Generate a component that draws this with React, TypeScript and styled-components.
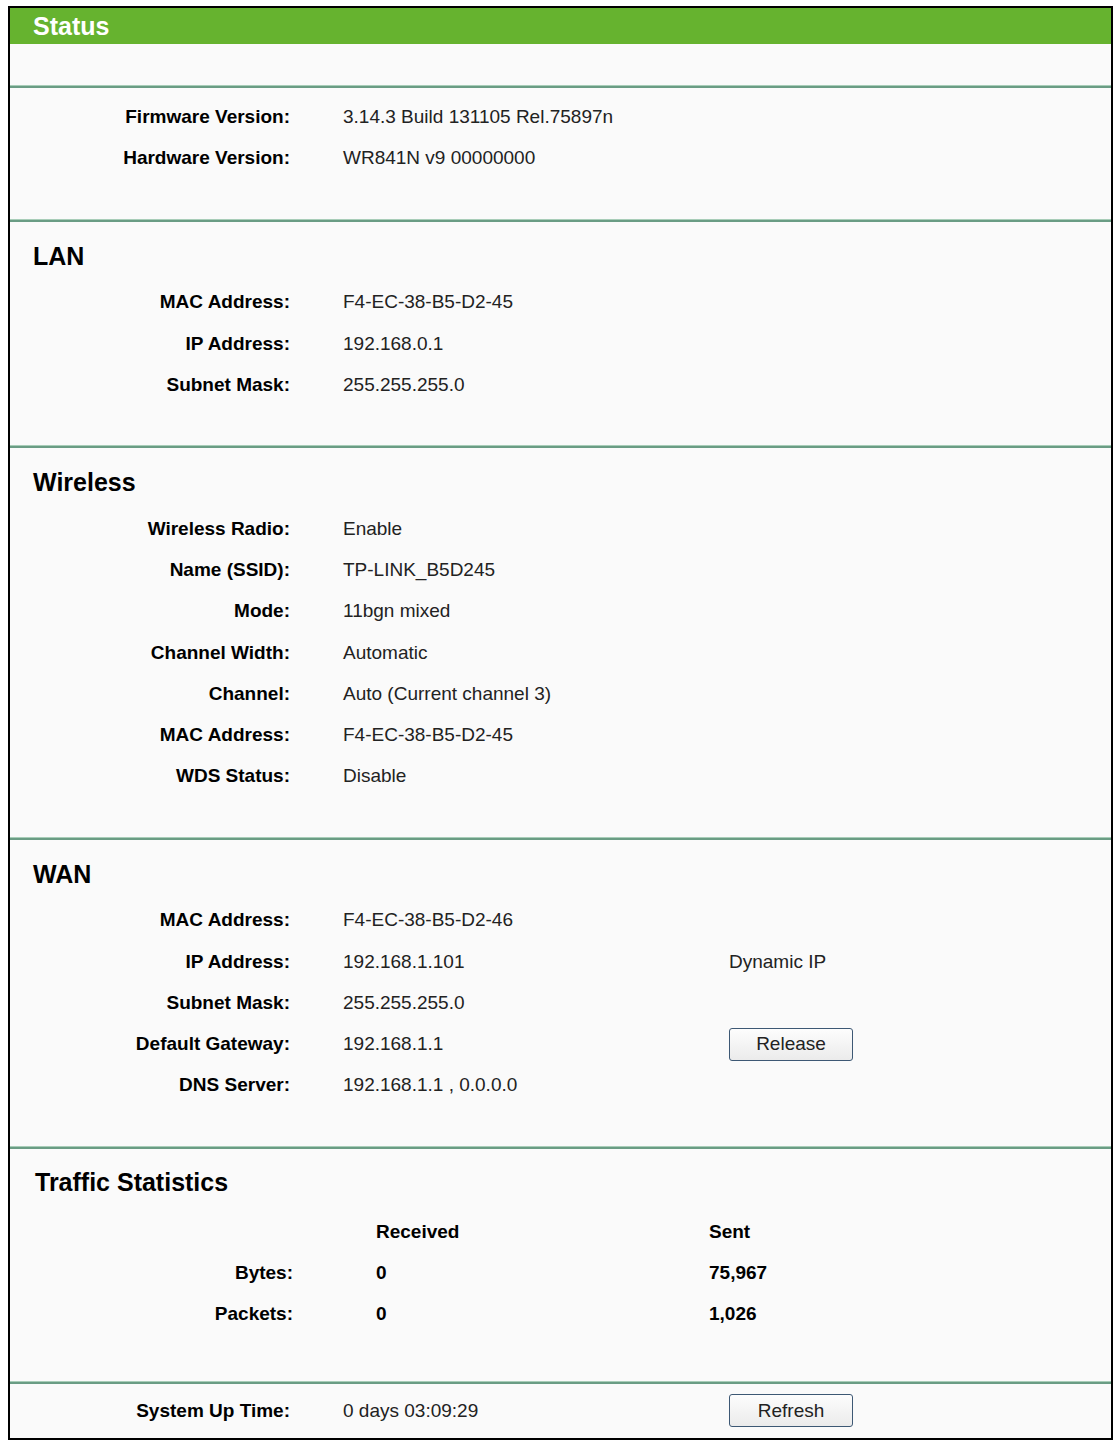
import React from 'react'
import styled, { createGlobalStyle } from 'styled-components'

const GlobalStyle = createGlobalStyle`
body {
    margin: 0;
    background: #ffffff;
    font-family: "Liberation Sans", Arial, sans-serif;
}
`

const Frame = styled.div`
width : 1105px;
margin : 6px 0 0 8px;
box-sizing : border-box;
border : 2px solid #000;
background : #fafafa;
font-size : 19px;
color : #222;
`
const TitleBar = styled.div`
height : 36px;
display : flex;
align-items : center;
padding-left : 23px;
background : #66b32f;
color : #fff;
font-size : 25px;
font-weight : bold;
`
const Spacer = styled.div<{ $h: number }>`
height : ${p => p.$h}px;
`
const Divider = styled.div`
height : 3px;
background : #6a9c84;
border-top : 1px solid #a8cdb8;
box-sizing : border-box;
`
const Section = styled.div<{ $top?: number, $bottom: number }>`
padding-top : ${p => p.$top || 0}px;
padding-bottom : ${p => p.$bottom}px;
`
const Heading = styled.div<{ $top: number, $bottom: number, $left?: number }>`
padding : ${p => p.$top}px 0 ${p => p.$bottom}px ${p => p.$left || 23}px;
font-size : 25px;
line-height : 30px;
font-weight : bold;
color : #000;
`
const InfoGrid = styled.div<{ $label: number, $gap: number, $value: number, $row: number }>`
display : grid;
grid-template-columns : ${p => p.$label}px ${p => p.$gap}px ${p => p.$value}px 1fr;
grid-auto-rows : ${p => p.$row}px;
align-items : center;
`
const Label = styled.div`
grid-column : 1;
text-align : right;
font-weight : bold;
color : #000;
white-space : nowrap;
`
const Value = styled.div<{ $bold?: boolean }>`
grid-column : 3;
white-space : nowrap;
font-weight : ${p => p.$bold ? 'bold' : 'normal'};
color : ${p => p.$bold ? '#000' : '#222'};
`
const Extra = styled.div<{ $bold?: boolean }>`
grid-column : 4;
white-space : nowrap;
font-weight : ${p => p.$bold ? 'bold' : 'normal'};
color : ${p => p.$bold ? '#000' : '#222'};
`
const Button = styled.button`
width : 124px;
height : 33px;
padding : 0;
border : 1px solid #3d5874;
border-radius : 3px;
background : linear-gradient(#fdfdfd, #ebebeb);
font-family : "Liberation Sans", Arial, sans-serif;
font-size : 19px;
color : #222;
`

type Row = { label: string, value: string, extra?: React.ReactNode }

const ROW = 41.3

function Rows({ rows }: { rows: Array<Row> }) {
    return (
        <InfoGrid $label={280} $gap={53} $value={386} $row={ROW}>
            {rows.map((r, i) => (
                <React.Fragment key={i}>
                    <Label>{r.label}</Label>
                    <Value>{r.value}</Value>
                    {r.extra ? <Extra>{r.extra}</Extra> : null}
                </React.Fragment>
            ))}
        </InfoGrid>
    )
}

function InfoSection({ title, rows }: { title: string, rows: Array<Row> }) {
    return (
        <Section $bottom={40}>
            <Heading $top={19} $bottom={10.5}>{title}</Heading>
            <Rows rows={rows} />
        </Section>
    )
}

function App() {
    return (
        <>
            <GlobalStyle />
            <Frame>
                <TitleBar>Status</TitleBar>
                <Spacer $h={40.5} />
                <Divider />
                <Section $top={9} $bottom={40}>
                    <Rows rows={[
                        { label: 'Firmware Version:', value: '3.14.3 Build 131105 Rel.75897n' },
                        { label: 'Hardware Version:', value: 'WR841N v9 00000000' },
                    ]} />
                </Section>
                <Divider />
                <InfoSection title="LAN" rows={[
                    { label: 'MAC Address:', value: 'F4-EC-38-B5-D2-45' },
                    { label: 'IP Address:', value: '192.168.0.1' },
                    { label: 'Subnet Mask:', value: '255.255.255.0' },
                ]} />
                <Divider />
                <InfoSection title="Wireless" rows={[
                    { label: 'Wireless Radio:', value: 'Enable' },
                    { label: 'Name (SSID):', value: 'TP-LINK_B5D245' },
                    { label: 'Mode:', value: '11bgn mixed' },
                    { label: 'Channel Width:', value: 'Automatic' },
                    { label: 'Channel:', value: 'Auto (Current channel 3)' },
                    { label: 'MAC Address:', value: 'F4-EC-38-B5-D2-45' },
                    { label: 'WDS Status:', value: 'Disable' },
                ]} />
                <Divider />
                <InfoSection title="WAN" rows={[
                    { label: 'MAC Address:', value: 'F4-EC-38-B5-D2-46' },
                    { label: 'IP Address:', value: '192.168.1.101', extra: 'Dynamic IP' },
                    { label: 'Subnet Mask:', value: '255.255.255.0' },
                    { label: 'Default Gateway:', value: '192.168.1.1', extra: <Button>Release</Button> },
                    { label: 'DNS Server:', value: '192.168.1.1 , 0.0.0.0' },
                ]} />
                <Divider />
                <Section $bottom={46}>
                    <Heading $top={18} $bottom={14} $left={25}>Traffic Statistics</Heading>
                    <InfoGrid $label={283} $gap={83} $value={333} $row={ROW}>
                        <Label></Label>
                        <Value $bold>Received</Value>
                        <Extra $bold>Sent</Extra>
                        <Label>Bytes:</Label>
                        <Value $bold>0</Value>
                        <Extra $bold>75,967</Extra>
                        <Label>Packets:</Label>
                        <Value $bold>0</Value>
                        <Extra $bold>1,026</Extra>
                    </InfoGrid>
                </Section>
                <Divider />
                <InfoGrid $label={280} $gap={53} $value={386} $row={54}>
                    <Label>System Up Time:</Label>
                    <Value>0 days 03:09:29</Value>
                    <Extra><Button>Refresh</Button></Extra>
                </InfoGrid>
            </Frame>
        </>
    )
}

export default App
